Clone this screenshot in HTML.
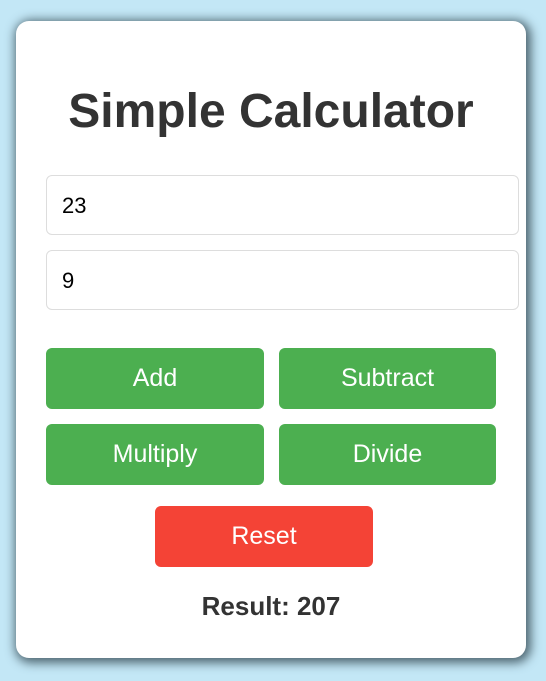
<!DOCTYPE html>
<html><head><style>
body{margin:0;width:546px;height:681px;background:#c3e7f6;font-family:"Liberation Sans",Arial,sans-serif;position:relative;overflow:hidden}
.card{position:absolute;left:16px;top:21px;width:510px;height:637px;background:#fff;border-radius:13px;box-shadow:2px 2px 10px 3px rgba(40,60,70,.75)}
h1{position:absolute;left:0;width:510px;top:63px;margin:0;text-align:center;font-size:48px;font-weight:bold;color:#333}
.in{position:absolute;left:30px;border:1px solid #ddd;border-radius:6px;font-size:22px;padding-left:15px;box-sizing:border-box;width:473px;color:#000}
.b{position:absolute;height:61px;border-radius:6px;background:#4caf50;color:#fff;font-size:25px;text-align:center;line-height:60px}
.res{position:absolute;left:0;width:510px;top:570px;text-align:center;font-size:26px;font-weight:bold;color:#333}
</style></head><body>
<div class="card">
<h1>Simple Calculator</h1>
<div class="in" style="top:154px;height:60px;line-height:59px">23</div>
<div class="in" style="top:229px;height:60px;line-height:59px">9</div>
<div class="b" style="left:30px;top:327px;width:218px">Add</div>
<div class="b" style="left:263px;top:327px;width:217px">Subtract</div>
<div class="b" style="left:30px;top:403px;width:218px">Multiply</div>
<div class="b" style="left:263px;top:403px;width:217px">Divide</div>
<div class="b" style="left:139px;top:485px;width:218px;background:#f44336">Reset</div>
<div class="res">Result: 207</div>
</div>
</body></html>
